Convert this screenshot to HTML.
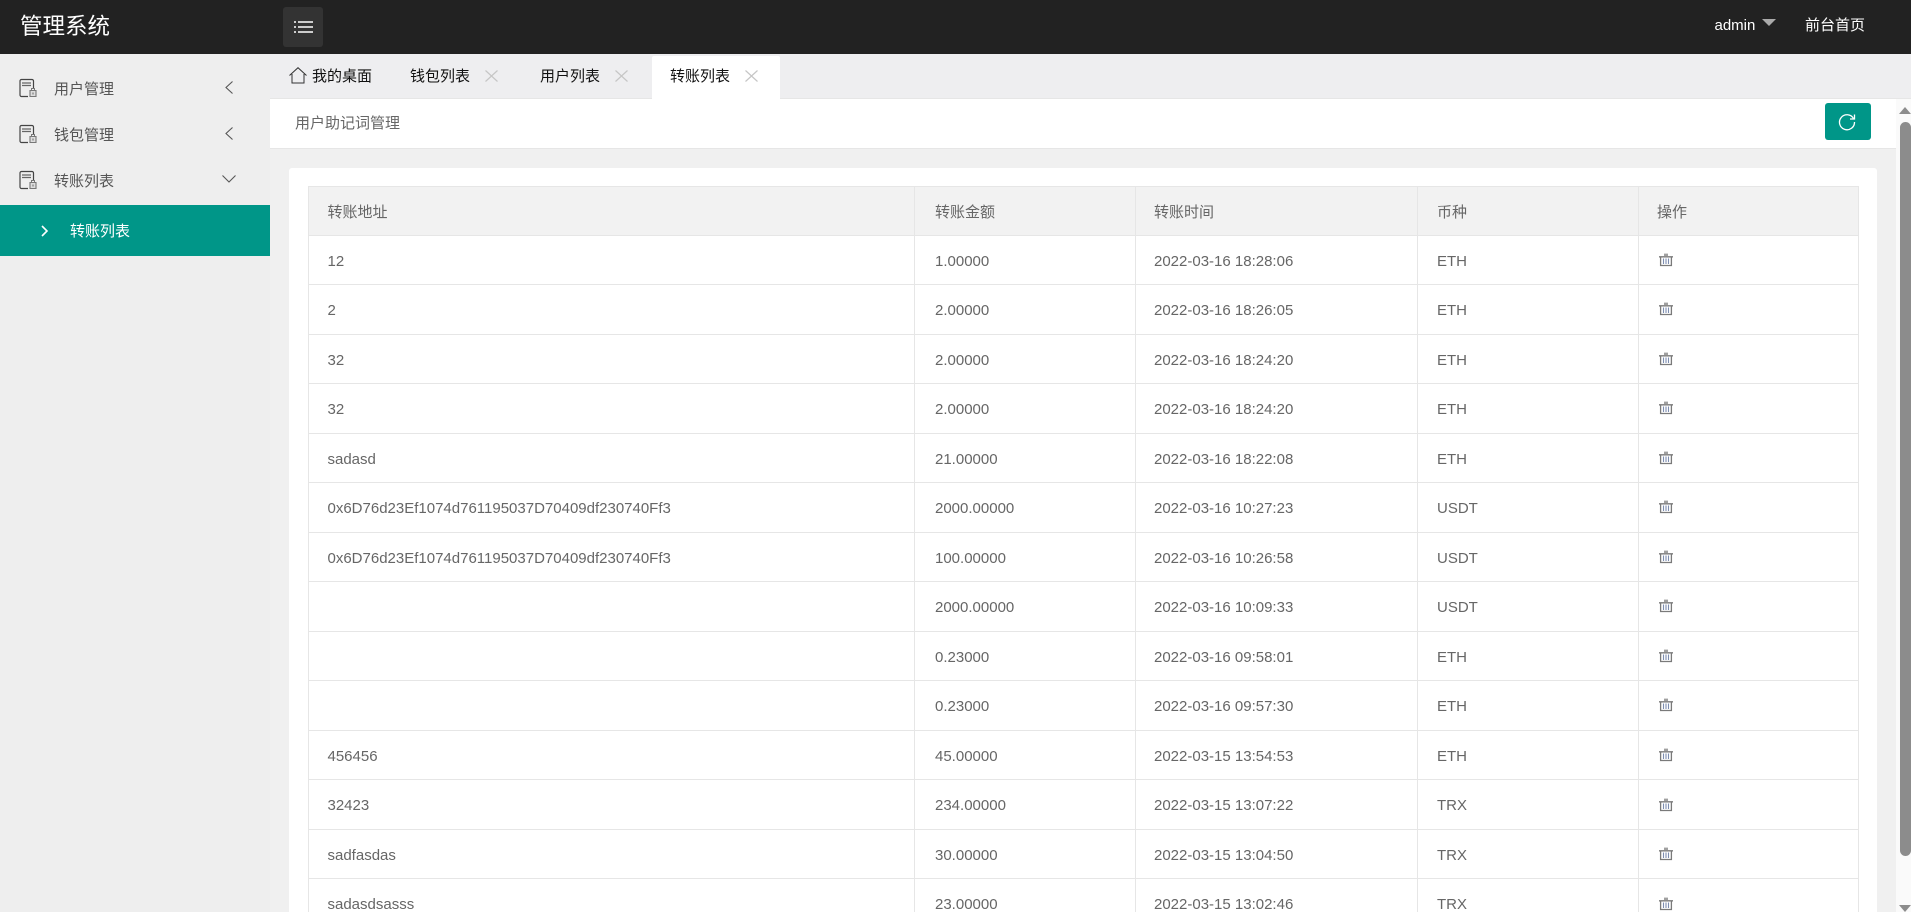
<!DOCTYPE html>
<html lang="zh"><head><meta charset="utf-8"><title>管理系统</title>
<style>
*{box-sizing:border-box}
html,body{margin:0;padding:0;width:1911px;height:912px;overflow:hidden;background:#f0f0f0}
body{font-family:"Liberation Sans","Noto Sans CJK SC",sans-serif;font-size:15px;color:#666;position:relative}
.a{position:absolute;white-space:nowrap}
.t{line-height:20px;height:20px}
svg{position:absolute;display:block;overflow:visible}
.row{position:absolute;left:308px;width:1551px;height:49.5px;border-bottom:1px solid #e6e6e6;background:#fff}
.c{position:absolute;top:0;height:100%;line-height:52px;white-space:nowrap}
.c1{left:19.5px}.c2{left:627px}.c3{left:846px}.c4{left:1129px}
.v{position:absolute;width:1px;top:186px;height:726px;background:#e6e6e6}
</style></head><body>
<div class="a" style="left:0;top:0;width:1911px;height:54px;background:#222"></div>
<div class="a t" style="left:20px;top:12px;height:30px;line-height:30px;font-size:22.5px;color:#fff">管理系统</div>
<div class="a" style="left:283px;top:7px;width:40px;height:40px;background:#333;border-radius:3px"></div>
<svg style="left:294px;top:21px" width="19" height="12" viewBox="0 0 19 12"><path d="M0 1h2M4 1h15M0 6h2M4 6h15M0 11h2M4 11h15" stroke="#fff" stroke-width="1.6" fill="none"/></svg>
<div class="a t" style="left:1714.5px;top:16px;color:#fff">admin</div>
<svg style="left:1762px;top:19px" width="14" height="7"><path d="M0 0h14L7 7z" fill="#aaa"/></svg>
<div class="a t" style="left:1805px;top:16px;color:#fff">前台首页</div>

<div class="a" style="left:0;top:54px;width:270px;height:858px;background:#eee"></div>
<svg style="left:19px;top:79px" width="18" height="18" viewBox="0 0 18 18" fill="none"><use href="#doc"/></svg>
<svg style="left:19px;top:125px" width="18" height="18" viewBox="0 0 18 18" fill="none"><use href="#doc"/></svg>
<svg style="left:19px;top:171px" width="18" height="18" viewBox="0 0 18 18" fill="none"><use href="#doc"/></svg>
<svg width="0" height="0" style="left:0;top:0"><defs><g id="doc"><path d="M9 17.500H2.500A1.500 1.500 0 0 1 1 16V2A1.500 1.500 0 0 1 2.500 .5H13A1.500 1.500 0 0 1 14.500 2V9" stroke="#444" stroke-width="1.200"/><path d="M3 4h9M3 6.500h9" stroke="#666" stroke-width="1.300"/><path d="M11 11.500h6v6h-6z" stroke="#777" stroke-width="1.100" fill="#ddd"/><path d="M12.500 11V9.500h3V11" stroke="#777"/><path d="M14 13.500v2" stroke="#666"/></g></defs></svg>
<div class="a t" style="left:54px;top:80px;color:#555">用户管理</div>
<div class="a t" style="left:54px;top:126px;color:#555">钱包管理</div>
<div class="a t" style="left:54px;top:172px;color:#555">转账列表</div>
<svg style="left:225px;top:81px" width="8" height="13"><path d="M7.500 .5L1 6.500l6.500 6" stroke="#555" fill="none" stroke-width="1.100"/></svg>
<svg style="left:225px;top:127px" width="8" height="13"><path d="M7.500 .5L1 6.500l6.500 6" stroke="#555" fill="none" stroke-width="1.100"/></svg>
<svg style="left:222px;top:175px" width="14" height="8"><path d="M.5 .5L7 7l6.500-6.500" stroke="#555" fill="none" stroke-width="1.100"/></svg>
<div class="a" style="left:0;top:205px;width:270px;height:51px;background:#009688"></div>
<svg style="left:41px;top:225px" width="7" height="12"><path d="M1 1l5 5-5 5" stroke="#fff" fill="none" stroke-width="1.600"/></svg>
<div class="a t" style="left:70px;top:222px;color:#fff">转账列表</div>

<div class="a" style="left:270px;top:54px;width:1641px;height:45px;background:#eeeef0;border-bottom:1px solid #e6e6e6"></div>
<svg style="left:289px;top:67px" width="18" height="17" viewBox="0 0 18 17" fill="none"><path d="M.5 8.500L9 .7l8.500 7.800" stroke="#333" stroke-width="1"/><path d="M3 7v9h12V7" stroke="#333" stroke-width="1"/></svg>
<div class="a t" style="left:312px;top:67px;color:#111">我的桌面</div>
<div class="a t" style="left:410px;top:67px;color:#111">钱包列表</div>
<svg style="left:485px;top:70px" width="13" height="12"><path d="M.5 .5l12 11M12.500 .5l-12 11" stroke="#c6c6c6" stroke-width="1.200"/></svg>
<div class="a t" style="left:540px;top:67px;color:#111">用户列表</div>
<svg style="left:615px;top:70px" width="13" height="12"><path d="M.5 .5l12 11M12.500 .5l-12 11" stroke="#c6c6c6" stroke-width="1.200"/></svg>
<div class="a" style="left:651.500px;top:56px;width:128.500px;height:44px;background:#fff;border-radius:2px 2px 0 0"></div>
<div class="a t" style="left:670px;top:67px;color:#111">转账列表</div>
<svg style="left:745px;top:70px" width="13" height="12"><path d="M.5 .5l12 11M12.500 .5l-12 11" stroke="#c6c6c6" stroke-width="1.200"/></svg>

<div class="a" style="left:270px;top:99px;width:1626px;height:50px;background:#fff;border-bottom:1px solid #e6e6e6"></div>
<div class="a t" style="left:295px;top:114px">用户助记词管理</div>
<div class="a" style="left:1825px;top:103px;width:46px;height:37px;background:#009688;border-radius:3px"></div>
<svg style="left:1838px;top:113px" width="18" height="18" viewBox="0 0 18 18" fill="none"><path d="M15.500 5.500A7.500 7.500 0 1 0 16.500 9" stroke="#fff" stroke-width="1.300"/><path d="M16.500 1.500v4.500H12" stroke="#fff" stroke-width="1.300"/></svg>

<div class="a" style="left:289px;top:168px;width:1588px;height:744px;background:#fff;border-radius:3px 3px 0 0"></div>
<div class="row" style="top:186px;height:50px;background:#f2f2f2;border-top:1px solid #e6e6e6"><span class="c c1">转账地址</span><span class="c c2">转账金额</span><span class="c c3">转账时间</span><span class="c c4">币种</span><span class="c" style="left:1349px">操作</span></div>

<div class="row" style="top:236px;height:49px"><span class="c c1">12</span><span class="c c2">1.00000</span><span class="c c3">2022-03-16 18:28:06</span><span class="c c4">ETH</span></div>
<div class="row" style="top:285px;height:50px"><span class="c c1">2</span><span class="c c2">2.00000</span><span class="c c3">2022-03-16 18:26:05</span><span class="c c4">ETH</span></div>
<div class="row" style="top:335px;height:49px"><span class="c c1">32</span><span class="c c2">2.00000</span><span class="c c3">2022-03-16 18:24:20</span><span class="c c4">ETH</span></div>
<div class="row" style="top:384px;height:50px"><span class="c c1">32</span><span class="c c2">2.00000</span><span class="c c3">2022-03-16 18:24:20</span><span class="c c4">ETH</span></div>
<div class="row" style="top:434px;height:49px"><span class="c c1">sadasd</span><span class="c c2">21.00000</span><span class="c c3">2022-03-16 18:22:08</span><span class="c c4">ETH</span></div>
<div class="row" style="top:483px;height:50px"><span class="c c1">0x6D76d23Ef1074d761195037D70409df230740Ff3</span><span class="c c2">2000.00000</span><span class="c c3">2022-03-16 10:27:23</span><span class="c c4">USDT</span></div>
<div class="row" style="top:533px;height:49px"><span class="c c1">0x6D76d23Ef1074d761195037D70409df230740Ff3</span><span class="c c2">100.00000</span><span class="c c3">2022-03-16 10:26:58</span><span class="c c4">USDT</span></div>
<div class="row" style="top:582px;height:50px"><span class="c c2">2000.00000</span><span class="c c3">2022-03-16 10:09:33</span><span class="c c4">USDT</span></div>
<div class="row" style="top:632px;height:49px"><span class="c c2">0.23000</span><span class="c c3">2022-03-16 09:58:01</span><span class="c c4">ETH</span></div>
<div class="row" style="top:681px;height:50px"><span class="c c2">0.23000</span><span class="c c3">2022-03-16 09:57:30</span><span class="c c4">ETH</span></div>
<div class="row" style="top:731px;height:49px"><span class="c c1">456456</span><span class="c c2">45.00000</span><span class="c c3">2022-03-15 13:54:53</span><span class="c c4">ETH</span></div>
<div class="row" style="top:780px;height:50px"><span class="c c1">32423</span><span class="c c2">234.00000</span><span class="c c3">2022-03-15 13:07:22</span><span class="c c4">TRX</span></div>
<div class="row" style="top:830px;height:49px"><span class="c c1">sadfasdas</span><span class="c c2">30.00000</span><span class="c c3">2022-03-15 13:04:50</span><span class="c c4">TRX</span></div>
<div class="row" style="top:879px;height:50px"><span class="c c1">sadasdsasss</span><span class="c c2">23.00000</span><span class="c c3">2022-03-15 13:02:46</span><span class="c c4">TRX</span></div>

<div class="v" style="left:308px"></div><div class="v" style="left:914px"></div><div class="v" style="left:1135px"></div><div class="v" style="left:1417px"></div><div class="v" style="left:1638px"></div><div class="v" style="left:1858px"></div>

<svg width="0" height="0" style="left:0;top:0"><defs><g id="tr"><path d="M0 3h14v1.600H0z" fill="#8a8a8a"/><path d="M5 3V.6h4V3z" fill="#a0a0a0"/><path d="M1.600 4v8.500h10.800V4" stroke="#7a7a7a" stroke-width="1.300" fill="none"/><path d="M4.500 5.500v5.500M7 5.500v5.500M9.500 5.500v5.500" stroke="#7d8db0" stroke-width="1.100"/></g></defs></svg>
<svg style="left:1659px;top:253px" width="14" height="13"><use href="#tr"/></svg>
<svg style="left:1659px;top:302px" width="14" height="13"><use href="#tr"/></svg>
<svg style="left:1659px;top:352px" width="14" height="13"><use href="#tr"/></svg>
<svg style="left:1659px;top:401px" width="14" height="13"><use href="#tr"/></svg>
<svg style="left:1659px;top:451px" width="14" height="13"><use href="#tr"/></svg>
<svg style="left:1659px;top:500px" width="14" height="13"><use href="#tr"/></svg>
<svg style="left:1659px;top:550px" width="14" height="13"><use href="#tr"/></svg>
<svg style="left:1659px;top:599px" width="14" height="13"><use href="#tr"/></svg>
<svg style="left:1659px;top:649px" width="14" height="13"><use href="#tr"/></svg>
<svg style="left:1659px;top:698px" width="14" height="13"><use href="#tr"/></svg>
<svg style="left:1659px;top:748px" width="14" height="13"><use href="#tr"/></svg>
<svg style="left:1659px;top:798px" width="14" height="13"><use href="#tr"/></svg>
<svg style="left:1659px;top:847px" width="14" height="13"><use href="#tr"/></svg>
<svg style="left:1659px;top:897px" width="14" height="13"><use href="#tr"/></svg>

<div class="a" style="left:1896px;top:99px;width:15px;height:813px;background:#fafafa"></div>
<svg style="left:1899px;top:107px" width="12" height="7"><path d="M6 0l6 7H0z" fill="#8c8c8c"/></svg>
<div class="a" style="left:1900px;top:122px;width:11px;height:734px;background:#8c8c8c;border-radius:6px"></div>
<svg style="left:1899px;top:905px" width="12" height="7"><path d="M0 0h12L6 7z" fill="#8c8c8c"/></svg>
</body></html>
